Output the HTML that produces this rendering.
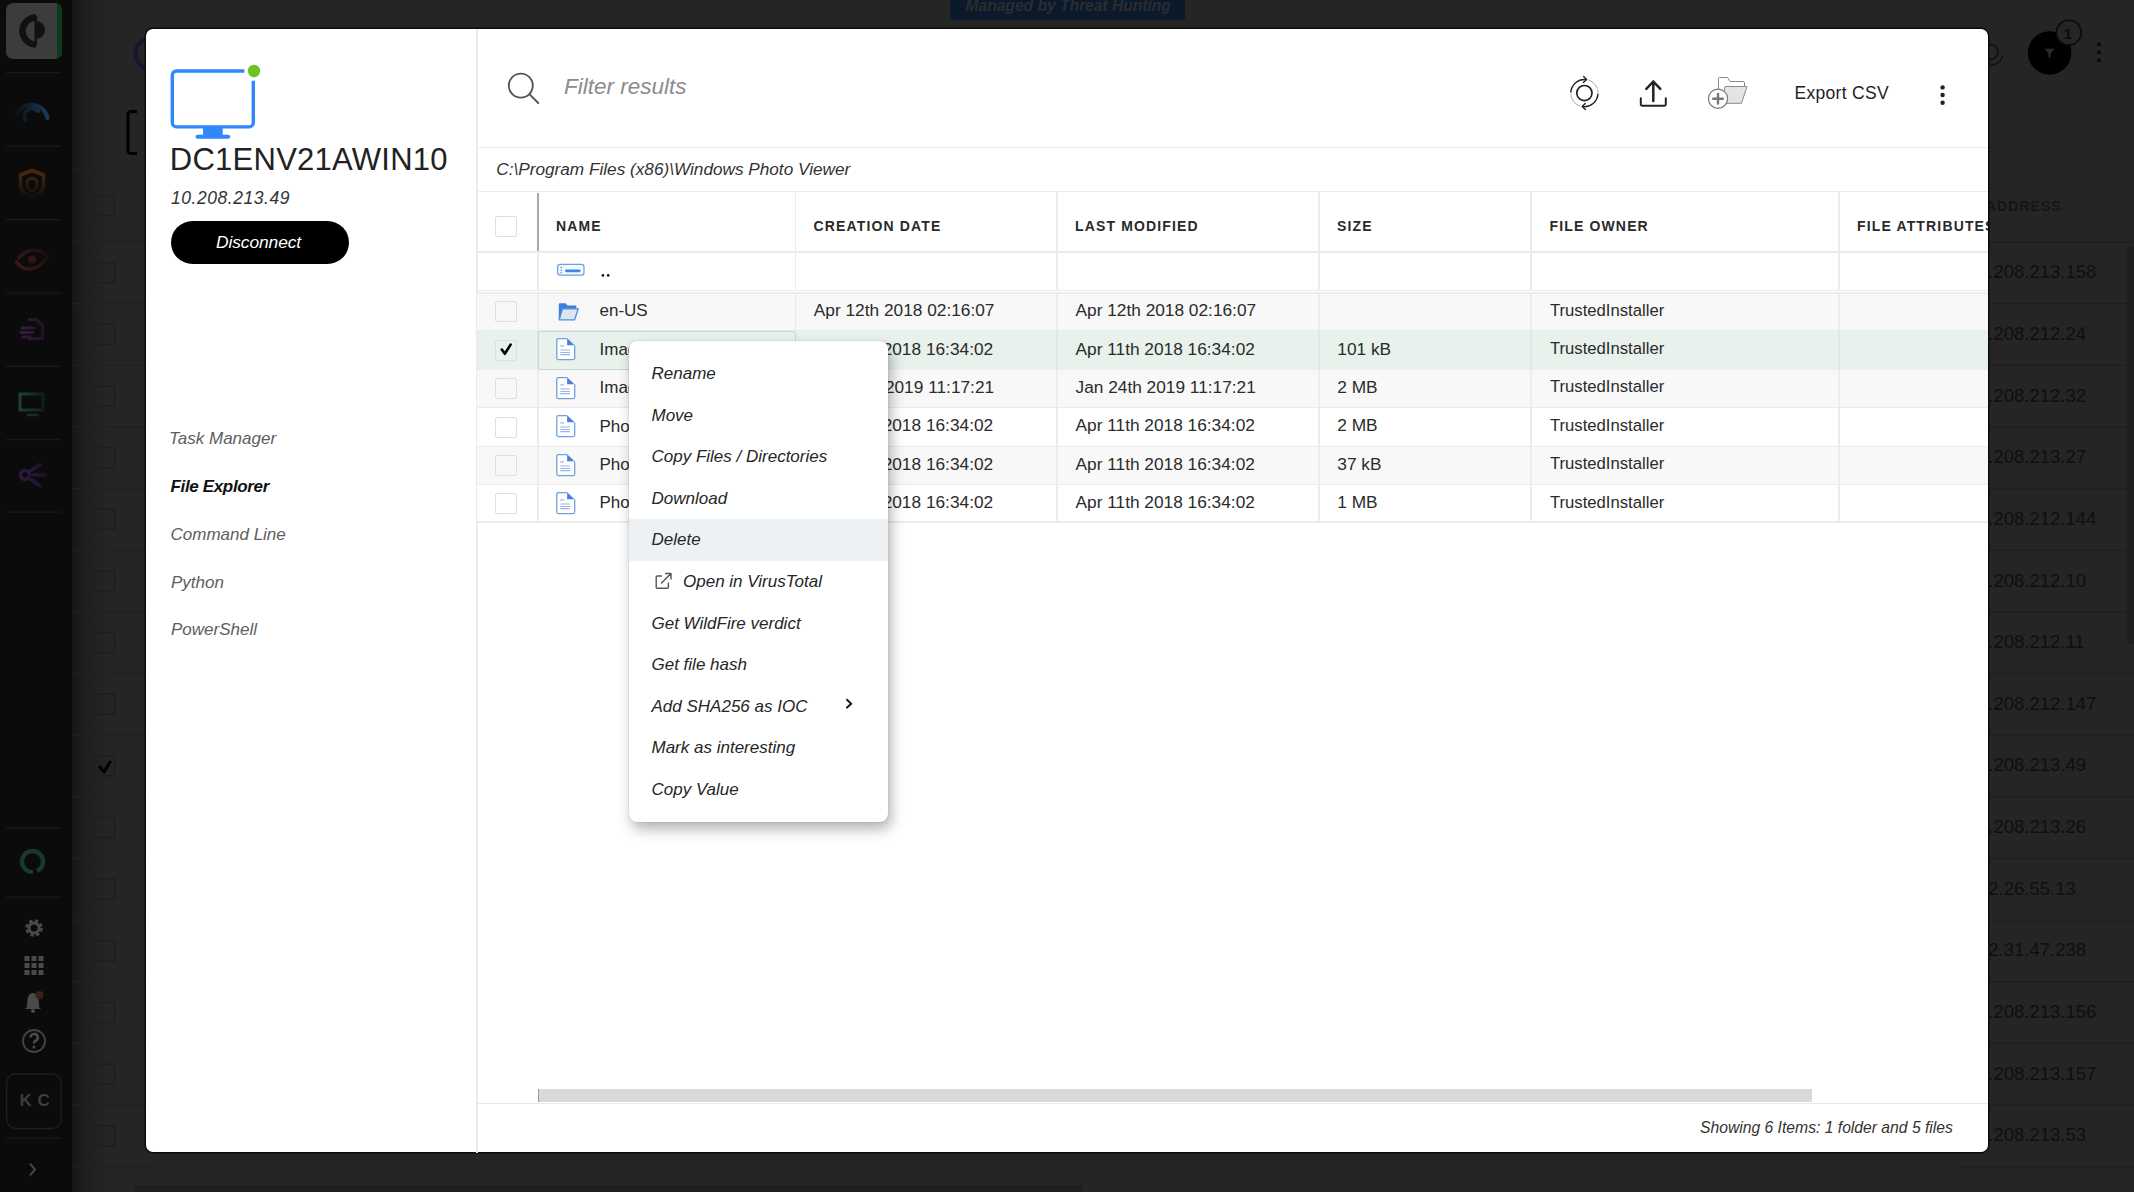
<!DOCTYPE html><html><head><meta charset="utf-8"><style>
*{box-sizing:border-box;margin:0;padding:0}
html,body{width:2134px;height:1192px;overflow:hidden;background:#252525;font-family:"Liberation Sans",sans-serif}
.a{position:absolute}
.t{position:absolute;white-space:nowrap;line-height:1}
.i{font-style:italic}
.hl{position:absolute;height:1.5px;background:#ececec}
.vl{position:absolute;width:1.5px;background:#ececec}
.cb{position:absolute;width:21.5px;height:21px;border:1.5px solid #dfdfdf;border-radius:2px;background:#fff}
.hd{font-weight:bold;letter-spacing:1.15px;color:#2a2a2a}
.rt{color:#2b2b2b}
.mi{font-style:italic;color:#262626}
.nav{font-style:italic;color:#5e5e5e}
</style></head><body>
<div class="a" style="left:0;top:0;width:72px;height:1192px;background:#0b0b0b"></div><div class="a" style="left:72px;top:0;width:38px;height:1192px;background:linear-gradient(90deg,#161616,#1e1e1e 30%,#252525)"></div><div class="a" style="left:6px;top:3px;width:55.5px;height:56px;background:#3c3c3c;border-radius:7px;overflow:hidden"><div class="a" style="right:0;top:0;width:4.5px;height:56px;background:#0d3a1c"></div></div><svg class="a" style="left:0;top:0" width="72" height="1192" viewBox="0 0 72 1192"><path d="M36 17.5 A12 12 0 0 0 36 44.5" fill="none" stroke="#111" stroke-width="6.5"/><path d="M36 21 A9 9 0 0 1 36 39" fill="#111"/><rect x="34.5" y="16" width="2.5" height="30" fill="#111"/><rect x="6" y="72" width="55" height="1.3" fill="#191919"/><rect x="6" y="145.7" width="55" height="1.3" fill="#191919"/><rect x="6" y="219" width="55" height="1.3" fill="#191919"/><rect x="6" y="292.5" width="55" height="1.3" fill="#191919"/><rect x="6" y="365.7" width="55" height="1.3" fill="#191919"/><rect x="6" y="439" width="55" height="1.3" fill="#191919"/><rect x="6" y="511.4" width="55" height="1.3" fill="#191919"/><rect x="6" y="827.5" width="55" height="1.3" fill="#191919"/><rect x="6" y="896.5" width="55" height="1.3" fill="#191919"/><rect x="6" y="1137.5" width="55" height="1.3" fill="#191919"/><defs><linearGradient id="gG" gradientUnits="userSpaceOnUse" x1="14" y1="0" x2="48" y2="0"><stop offset="0" stop-color="#0e0e0e"/><stop offset="1" stop-color="#173a5e"/></linearGradient><linearGradient id="gS" gradientUnits="userSpaceOnUse" x1="0" y1="170" x2="0" y2="198"><stop offset="0" stop-color="#4a2a0c"/><stop offset="1" stop-color="#140c06"/></linearGradient><linearGradient id="gE" gradientUnits="userSpaceOnUse" x1="16" y1="268" x2="48" y2="250"><stop offset="0" stop-color="#3f1818"/><stop offset="1" stop-color="#1a0d0d"/></linearGradient><linearGradient id="gD" gradientUnits="userSpaceOnUse" x1="20" y1="0" x2="44" y2="0"><stop offset="0" stop-color="#3a1c42"/><stop offset="1" stop-color="#1e1222"/></linearGradient><linearGradient id="gM" gradientUnits="userSpaceOnUse" x1="18" y1="0" x2="46" y2="0"><stop offset="0" stop-color="#1c4636"/><stop offset="1" stop-color="#0f1a16"/></linearGradient><linearGradient id="gH" gradientUnits="userSpaceOnUse" x1="18" y1="0" x2="48" y2="0"><stop offset="0" stop-color="#2e1a44"/><stop offset="1" stop-color="#1a1224"/></linearGradient></defs><path d="M16.5 114 A16.5 16.5 0 0 1 47.5 118" fill="none" stroke="url(#gG)" stroke-width="4" stroke-linecap="round"/><path d="M25 120 A8 8 0 0 1 38 111" fill="none" stroke="url(#gG)" stroke-width="4" stroke-linecap="round"/><path d="M32 170.5 L43.5 175 V184 C43.5 191 38 195 32 197 C26 195 20.5 191 20.5 184 V175 Z" fill="none" stroke="url(#gS)" stroke-width="3.5" stroke-linejoin="round"/><path d="M32 178 L37 180.5 V185 C37 188 35 190 32 191.5 C29 190 27 188 27 185 V180.5 Z" fill="none" stroke="url(#gS)" stroke-width="2.6"/><path d="M16.5 262 C24 272 38 272 47 257" fill="none" stroke="url(#gE)" stroke-width="3.5" stroke-linecap="round"/><path d="M19 258 C27 248 40 248 47 256" fill="none" stroke="url(#gE)" stroke-width="3.5" stroke-linecap="round"/><circle cx="32" cy="259.5" r="4" fill="#2e1414"/><path d="M28 319.5 H36.5 L42.5 325.5 V338.5 H28" fill="none" stroke="url(#gD)" stroke-width="3.2" stroke-linejoin="round"/><path d="M22 328 H34 M21 332.5 H33 M23 337 H30" stroke="url(#gD)" stroke-width="3" stroke-linecap="round"/><path d="M20 394 H43 V410 H20 Z" fill="none" stroke="url(#gM)" stroke-width="3"/><path d="M28 415 H38" stroke="url(#gM)" stroke-width="2.5" stroke-linecap="round"/><circle cx="25" cy="475" r="4.5" fill="none" stroke="url(#gH)" stroke-width="3.5"/><path d="M31 470.5 L40 464.5 M33 475 H45 M31 479.5 L40 486" stroke="url(#gH)" stroke-width="3.5" stroke-linecap="round"/><path d="M33 872 A10.5 10.5 0 1 1 37 871" fill="none" stroke="#173a2d" stroke-width="4.5"/><circle cx="34" cy="928" r="6.5" fill="none" stroke="#4a4a4a" stroke-width="4.5" stroke-dasharray="3 2.1"/><circle cx="34" cy="928" r="5" fill="none" stroke="#4a4a4a" stroke-width="3"/><rect x="24.5" y="956" width="5" height="5" fill="#4a4a4a"/><rect x="24.5" y="963" width="5" height="5" fill="#4a4a4a"/><rect x="24.5" y="970" width="5" height="5" fill="#4a4a4a"/><rect x="31.5" y="956" width="5" height="5" fill="#4a4a4a"/><rect x="31.5" y="963" width="5" height="5" fill="#4a4a4a"/><rect x="31.5" y="970" width="5" height="5" fill="#4a4a4a"/><rect x="38.5" y="956" width="5" height="5" fill="#4a4a4a"/><rect x="38.5" y="963" width="5" height="5" fill="#4a4a4a"/><rect x="38.5" y="970" width="5" height="5" fill="#4a4a4a"/><path d="M27 1007 C27 996 29 993 33 993 C37 993 39 996 39 1007 L41 1009 H25 Z" fill="#4a4a4a"/><circle cx="33" cy="1011" r="2" fill="#4a4a4a"/><circle cx="39.5" cy="995" r="4" fill="#3d1c1c"/><circle cx="34" cy="1041" r="11" fill="none" stroke="#444" stroke-width="1.8"/><path d="M30.5 1037.5 A3.6 3.6 0 1 1 35 1041 C34 1041.7 34 1042 34 1043.5" fill="none" stroke="#4a4a4a" stroke-width="2.6"/><circle cx="34" cy="1047" r="1.5" fill="#4a4a4a"/><rect x="6.7" y="1074" width="54.5" height="54.5" rx="9" fill="none" stroke="#1f1f1f" stroke-width="1.3"/><path d="M30 1163.5 L35 1169.5 L30 1175.5" fill="none" stroke="#444" stroke-width="2"/></svg><div class="t " style="left:19.5px;top:1092.1px;font-size:17px;color:#3e3e3e;font-weight:bold;letter-spacing:0.5px">K C</div>
<svg class="a" style="left:72px;top:0" width="80" height="1192" viewBox="72 0 80 1192"><circle cx="151" cy="53.6" r="15.5" fill="none" stroke="#1e1230" stroke-width="4"/><path d="M137 111.5 H131 A3 3 0 0 0 128 114.5 V150.5 A3 3 0 0 0 131 153.5 H137" fill="none" stroke="#000" stroke-width="3"/><rect x="72" y="169" width="80" height="1" fill="#202020"/><rect x="94.5" y="195.5" width="20" height="20" fill="none" stroke="#1e1e1e" stroke-width="1.2"/><rect x="94.5" y="262.7" width="20" height="20" fill="none" stroke="#1d1d1d" stroke-width="1.2"/><rect x="94.5" y="324.3" width="20" height="20" fill="none" stroke="#1d1d1d" stroke-width="1.2"/><rect x="94.5" y="386.0" width="20" height="20" fill="none" stroke="#1d1d1d" stroke-width="1.2"/><rect x="94.5" y="447.6" width="20" height="20" fill="none" stroke="#1d1d1d" stroke-width="1.2"/><rect x="94.5" y="509.3" width="20" height="20" fill="none" stroke="#1d1d1d" stroke-width="1.2"/><rect x="94.5" y="571.0" width="20" height="20" fill="none" stroke="#1d1d1d" stroke-width="1.2"/><rect x="94.5" y="632.6" width="20" height="20" fill="none" stroke="#1d1d1d" stroke-width="1.2"/><rect x="94.5" y="694.2" width="20" height="20" fill="none" stroke="#1d1d1d" stroke-width="1.2"/><rect x="94.5" y="755.9" width="20" height="20" fill="none" stroke="#1d1d1d" stroke-width="1.2"/><rect x="94.5" y="817.5" width="20" height="20" fill="none" stroke="#1d1d1d" stroke-width="1.2"/><rect x="94.5" y="879.2" width="20" height="20" fill="none" stroke="#1d1d1d" stroke-width="1.2"/><rect x="94.5" y="940.8" width="20" height="20" fill="none" stroke="#1d1d1d" stroke-width="1.2"/><rect x="94.5" y="1002.5" width="20" height="20" fill="none" stroke="#1d1d1d" stroke-width="1.2"/><rect x="94.5" y="1064.1" width="20" height="20" fill="none" stroke="#1d1d1d" stroke-width="1.2"/><rect x="94.5" y="1125.8" width="20" height="20" fill="none" stroke="#1d1d1d" stroke-width="1.2"/><rect x="72" y="241.4" width="80" height="1.2" fill="#212121"/><rect x="72" y="303.1" width="80" height="1.2" fill="#212121"/><rect x="72" y="364.7" width="80" height="1.2" fill="#212121"/><rect x="72" y="426.4" width="80" height="1.2" fill="#212121"/><rect x="72" y="488.0" width="80" height="1.2" fill="#212121"/><rect x="72" y="549.6" width="80" height="1.2" fill="#212121"/><rect x="72" y="611.3" width="80" height="1.2" fill="#212121"/><rect x="72" y="673.0" width="80" height="1.2" fill="#212121"/><rect x="72" y="734.6" width="80" height="1.2" fill="#212121"/><rect x="72" y="796.2" width="80" height="1.2" fill="#212121"/><rect x="72" y="857.9" width="80" height="1.2" fill="#212121"/><rect x="72" y="919.5" width="80" height="1.2" fill="#212121"/><rect x="72" y="981.2" width="80" height="1.2" fill="#212121"/><rect x="72" y="1042.8" width="80" height="1.2" fill="#212121"/><rect x="72" y="1104.5" width="80" height="1.2" fill="#212121"/><rect x="72" y="1166.2" width="80" height="1.2" fill="#212121"/><path d="M100 767 L104 772 L110 762" fill="none" stroke="#000" stroke-width="3" stroke-linecap="round" stroke-linejoin="round"/></svg><div class="a" style="left:950px;top:-10px;width:234.5px;height:30px;background:#0b1a2b;border-radius:3px"></div><div class="t i" style="left:965.5px;top:-2.2px;font-size:15.6px;color:#2a2c30;font-weight:bold">Managed by Threat Hunting</div>
<svg class="a" style="left:1960px;top:0" width="174" height="1192" viewBox="1960 0 174 1192"><circle cx="1990.5" cy="52" r="7.5" fill="none" stroke="#0d0d0d" stroke-width="1.3"/><path d="M2003 55 A13.5 13.5 0 0 1 1990 65.5" fill="none" stroke="#0d0d0d" stroke-width="1.3"/><path d="M1997 40 A13.5 13.5 0 0 1 2003.5 49" fill="none" stroke="#111" stroke-width="0.8" stroke-dasharray="1.5 1.5"/><circle cx="2049.6" cy="52.9" r="21.7" fill="#000"/><path d="M2044.5 48.8 H2054.5 L2050.5 53.5 V58.5 L2048.5 57 V53.5 Z" fill="#2a2a2a"/><circle cx="2068.8" cy="32.7" r="12.4" fill="#252525" stroke="#0a0a0a" stroke-width="1.6"/><circle cx="2099" cy="44.3" r="2.1" fill="#0b0b0b"/><circle cx="2099" cy="52.4" r="2.1" fill="#0b0b0b"/><circle cx="2099" cy="60.4" r="2.1" fill="#0b0b0b"/><rect x="1960" y="241.4" width="174" height="1.2" fill="#1f1f1f"/><rect x="1960" y="303.1" width="174" height="1.2" fill="#1f1f1f"/><rect x="1960" y="364.7" width="174" height="1.2" fill="#1f1f1f"/><rect x="1960" y="426.4" width="174" height="1.2" fill="#1f1f1f"/><rect x="1960" y="488.0" width="174" height="1.2" fill="#1f1f1f"/><rect x="1960" y="549.6" width="174" height="1.2" fill="#1f1f1f"/><rect x="1960" y="611.3" width="174" height="1.2" fill="#1f1f1f"/><rect x="1960" y="673.0" width="174" height="1.2" fill="#1f1f1f"/><rect x="1960" y="734.6" width="174" height="1.2" fill="#1f1f1f"/><rect x="1960" y="796.2" width="174" height="1.2" fill="#1f1f1f"/><rect x="1960" y="857.9" width="174" height="1.2" fill="#1f1f1f"/><rect x="1960" y="919.5" width="174" height="1.2" fill="#1f1f1f"/><rect x="1960" y="981.2" width="174" height="1.2" fill="#1f1f1f"/><rect x="1960" y="1042.8" width="174" height="1.2" fill="#1f1f1f"/><rect x="1960" y="1104.5" width="174" height="1.2" fill="#1f1f1f"/><rect x="1960" y="1166.2" width="174" height="1.2" fill="#1f1f1f"/><rect x="2127" y="247" width="7" height="397" fill="#1f1f1f"/></svg><div class="t " style="left:2063.5px;top:26.4px;font-size:15.5px;color:#0b0b0b;font-weight:bold">1</div>
<div class="t " style="left:1985.5px;top:199.4px;font-size:14.5px;color:#151515;font-weight:bold;letter-spacing:0.75px">ADDRESS</div>
<div class="t " style="left:1967.7px;top:263.2px;font-size:18.5px;color:#0f0f0f">10.208.213.158</div>
<div class="t " style="left:1967.7px;top:324.9px;font-size:18.5px;color:#0f0f0f">10.208.212.24</div>
<div class="t " style="left:1967.7px;top:386.5px;font-size:18.5px;color:#0f0f0f">10.208.212.32</div>
<div class="t " style="left:1967.7px;top:448.2px;font-size:18.5px;color:#0f0f0f">10.208.213.27</div>
<div class="t " style="left:1967.7px;top:509.8px;font-size:18.5px;color:#0f0f0f">10.208.212.144</div>
<div class="t " style="left:1967.7px;top:571.5px;font-size:18.5px;color:#0f0f0f">10.208.212.10</div>
<div class="t " style="left:1967.7px;top:633.1px;font-size:18.5px;color:#0f0f0f">10.208.212.11</div>
<div class="t " style="left:1967.7px;top:694.8px;font-size:18.5px;color:#0f0f0f">10.208.212.147</div>
<div class="t " style="left:1967.7px;top:756.4px;font-size:18.5px;color:#0f0f0f">10.208.213.49</div>
<div class="t " style="left:1967.7px;top:818.1px;font-size:18.5px;color:#0f0f0f">10.208.213.26</div>
<div class="t " style="left:1967.7px;top:879.7px;font-size:18.5px;color:#0f0f0f">172.26.55.13</div>
<div class="t " style="left:1967.7px;top:941.4px;font-size:18.5px;color:#0f0f0f">172.31.47.238</div>
<div class="t " style="left:1967.7px;top:1003.0px;font-size:18.5px;color:#0f0f0f">10.208.213.156</div>
<div class="t " style="left:1967.7px;top:1064.7px;font-size:18.5px;color:#0f0f0f">10.208.213.157</div>
<div class="t " style="left:1967.7px;top:1126.3px;font-size:18.5px;color:#0f0f0f">10.208.213.53</div>
<div class="a" style="left:135px;top:1185px;width:948px;height:7px;background:#1f1f1f"></div><div class="a" style="left:145.5px;top:29.3px;width:1842.8px;height:1122.9px;background:#fff;border-radius:7px;box-shadow:0 0 0 1.5px #0c0c0c"></div><div class="vl" style="left:476px;top:29px;height:1124px;background:#ebebeb"></div><svg class="a" style="left:0;top:0" width="480" height="160" viewBox="0 0 480 160"><path d="M244.4 71 H176.5 A4.2 4.2 0 0 0 172.3 75.2 V122.7 A4.2 4.2 0 0 0 176.5 126.9 H249.1 A4.2 4.2 0 0 0 253.3 122.7 V80.7" fill="none" stroke="#2f88fc" stroke-width="3.4"/><rect x="203" y="127" width="19.7" height="9" fill="#2f88fc"/><rect x="195.5" y="134.8" width="34.7" height="4" rx="2" fill="#2f88fc"/><circle cx="254" cy="71" r="6.2" fill="#6cc51f"/></svg><div class="t " style="left:169.8px;top:144.4px;font-size:31px;color:#222;letter-spacing:0.25px">DC1ENV21AWIN10</div>
<div class="t i" style="left:171.0px;top:189.9px;font-size:17.5px;color:#333;letter-spacing:0.55px">10.208.213.49</div>
<div class="a" style="left:170.5px;top:220.7px;width:178.3px;height:43px;border-radius:22px;background:#000"></div><div class="t i" style="left:216.0px;top:233.5px;font-size:17.4px;color:#fff;letter-spacing:-0.1px">Disconnect</div>
<div class="t nav" style="left:169.0px;top:430.2px;font-size:17px;">Task Manager</div>
<div class="t nav" style="left:169.0px;top:478.0px;font-size:17px;font-weight:bold;color:#111;letter-spacing:-0.35px;left:170.5px">File Explorer</div>
<div class="t nav" style="left:169.0px;top:525.8px;font-size:17px;left:170.5px">Command Line</div>
<div class="t nav" style="left:169.0px;top:573.6px;font-size:17px;left:171px">Python</div>
<div class="t nav" style="left:169.0px;top:621.4px;font-size:17px;left:171px">PowerShell</div>
<svg class="a" style="left:0;top:0" width="2000" height="140" viewBox="0 0 2000 140"><circle cx="520.8" cy="85.6" r="12" fill="none" stroke="#555" stroke-width="1.9"/><line x1="529.6" y1="94.4" x2="538.3" y2="103" stroke="#555" stroke-width="1.9" stroke-linecap="round"/><circle cx="1584.4" cy="93.1" r="7.6" fill="none" stroke="#222" stroke-width="1.7"/><path d="M1570.81 92.63 A13.6 13.6 0 0 1 1586.29 79.63" fill="none" stroke="#222" stroke-width="1.4"/><path d="M1583.6 76.6 L1586.6 79.6 L1583.4 82.6" fill="none" stroke="#222" stroke-width="1.4" stroke-linecap="round" stroke-linejoin="round"/><path d="M1597.99 93.57 A13.6 13.6 0 0 1 1582.51 106.57" fill="none" stroke="#222" stroke-width="1.4"/><path d="M1585.2 103.6 L1582.2 106.6 L1585.4 109.6" fill="none" stroke="#222" stroke-width="1.4" stroke-linecap="round" stroke-linejoin="round"/><path d="M1588.60 80.17 A13.6 13.6 0 0 1 1597.97 92.15" fill="none" stroke="#555" stroke-width="0.9" stroke-dasharray="1.2 0.9"/><path d="M1580.20 106.03 A13.6 13.6 0 0 1 1570.83 94.05" fill="none" stroke="#555" stroke-width="0.9" stroke-dasharray="1.2 0.9"/><path d="M1653.3 101 V81.5 M1646.3 88.8 L1653.3 81.5 L1660.3 88.8" fill="none" stroke="#222" stroke-width="2.5" stroke-linecap="round" stroke-linejoin="round"/><path d="M1640.8 98.3 V104.3 A1.5 1.5 0 0 0 1642.3 105.8 H1664.3 A1.5 1.5 0 0 0 1665.8 104.3 V98.3" fill="none" stroke="#222" stroke-width="2" stroke-linecap="round" stroke-linejoin="round"/><path d="M1718.5 99 V78.5 A1 1 0 0 1 1719.5 77.5 H1727.5 L1730 81.5 H1743 A1.5 1.5 0 0 1 1744.5 83 V88" fill="#fff" stroke="#8a8a8a" stroke-width="1"/><path d="M1725 86.5 H1747 L1741.5 103.3 H1722.5 Z" fill="#e4e4e4" stroke="#8a8a8a" stroke-width="1" stroke-linejoin="round"/><circle cx="1718" cy="98.7" r="9.6" fill="#fff" stroke="#7a7a7a" stroke-width="1.2"/><path d="M1718 94 V103.6 M1713.2 98.8 H1722.8" stroke="#777" stroke-width="2.4" stroke-linecap="round"/><circle cx="1942.6" cy="87.4" r="2.2" fill="#222"/><circle cx="1942.6" cy="95" r="2.2" fill="#222"/><circle cx="1942.6" cy="102.7" r="2.2" fill="#222"/></svg><div class="t i" style="left:564.0px;top:75.9px;font-size:22.5px;color:#8c8c8c">Filter results</div>
<div class="t " style="left:1794.5px;top:85.1px;font-size:17.5px;color:#222;letter-spacing:0.3px">Export CSV</div>
<div class="hl" style="left:477px;top:146.5px;width:1511px"></div><div class="t i" style="left:496.3px;top:161.0px;font-size:17.2px;color:#333">C:\Program Files (x86)\Windows Photo Viewer</div>
<div class="hl" style="left:477px;top:190.8px;width:1511px"></div><div class="a" style="left:0;top:0;width:1988px;height:1153px;overflow:hidden"><div class="cb" style="left:495.3px;top:216.3px"></div><div class="a" style="left:537px;top:193px;width:1.6px;height:58px;background:#a8a8a8"></div><div class="vl" style="left:794.5px;top:192px;height:60px"></div><div class="vl" style="left:1056.3px;top:192px;height:60px"></div><div class="vl" style="left:1318.2px;top:192px;height:60px"></div><div class="vl" style="left:1530.3px;top:192px;height:60px"></div><div class="vl" style="left:1838.3px;top:192px;height:60px"></div><div class="t hd" style="left:556.0px;top:219.0px;font-size:14px;">NAME</div>
<div class="t hd" style="left:813.5px;top:219.0px;font-size:14px;">CREATION DATE</div>
<div class="t hd" style="left:1075.0px;top:219.0px;font-size:14px;">LAST MODIFIED</div>
<div class="t hd" style="left:1337.0px;top:219.0px;font-size:14px;">SIZE</div>
<div class="t hd" style="left:1549.5px;top:219.0px;font-size:14px;">FILE OWNER</div>
<div class="t hd" style="left:1857.0px;top:219.0px;font-size:14px;">FILE ATTRIBUTES</div>
<div class="hl" style="left:477px;top:251px;width:1511px"></div><div class="vl" style="left:537.3px;top:252px;height:38px"></div><div class="vl" style="left:794.5px;top:252px;height:38px"></div><div class="vl" style="left:1056.3px;top:252px;height:38px"></div><div class="vl" style="left:1318.2px;top:252px;height:38px"></div><div class="vl" style="left:1530.3px;top:252px;height:38px"></div><div class="vl" style="left:1838.3px;top:252px;height:38px"></div><div class="hl" style="left:477px;top:289.6px;width:1511px"></div><div class="a" style="left:477px;top:293.0px;width:1511px;height:37.9px;background:#f8f8f8"></div><div class="vl" style="left:537.3px;top:293.0px;height:37.9px;background:#ececec"></div><div class="vl" style="left:794.5px;top:293.0px;height:37.9px;background:#ececec"></div><div class="vl" style="left:1056.3px;top:293.0px;height:37.9px;background:#ececec"></div><div class="vl" style="left:1318.2px;top:293.0px;height:37.9px;background:#ececec"></div><div class="vl" style="left:1530.3px;top:293.0px;height:37.9px;background:#ececec"></div><div class="vl" style="left:1838.3px;top:293.0px;height:37.9px;background:#ececec"></div><div class="hl" style="left:477px;top:329.9px;width:1511px;height:2px;background:#ebebeb"></div><div class="hl" style="left:477px;top:292px;width:1511px;height:1.6px;background:#ededed"></div><div class="cb" style="left:495.3px;top:301.4px;background:#f8f8f8"></div><div class="t rt" style="left:599.5px;top:302.3px;font-size:17px;">en-US</div>
<div class="t rt" style="left:813.8px;top:302.1px;font-size:17.3px;">Apr 12th 2018 02:16:07</div>
<div class="t rt" style="left:1075.5px;top:302.1px;font-size:17.3px;">Apr 12th 2018 02:16:07</div>
<div class="t rt" style="left:1337.3px;top:302.1px;font-size:17.3px;"></div>
<div class="t rt" style="left:1549.9px;top:302.6px;font-size:16.7px;">TrustedInstaller</div>
<div class="a" style="left:477px;top:330.9px;width:1511px;height:38.8px;background:#e8f1ec"></div><div class="vl" style="left:537.3px;top:330.9px;height:38.8px;background:#dfe8e3"></div><div class="vl" style="left:794.5px;top:330.9px;height:38.8px;background:#dfe8e3"></div><div class="vl" style="left:1056.3px;top:330.9px;height:38.8px;background:#dfe8e3"></div><div class="vl" style="left:1318.2px;top:330.9px;height:38.8px;background:#dfe8e3"></div><div class="vl" style="left:1530.3px;top:330.9px;height:38.8px;background:#dfe8e3"></div><div class="vl" style="left:1838.3px;top:330.9px;height:38.8px;background:#dfe8e3"></div><div class="hl" style="left:477px;top:368.7px;width:1511px;height:2px;background:#ebebeb"></div><div class="cb" style="left:495.3px;top:339.8px;background:#e8f1ec"></div><svg class="a" style="left:495px;top:339.3px" width="22" height="22" viewBox="0 0 22 22"><path d="M6.8 10.5 L9.8 14.8 L15.6 5.6" fill="none" stroke="#000" stroke-width="2.6" stroke-linecap="round" stroke-linejoin="round"/></svg><div class="t rt" style="left:599.5px;top:340.7px;font-size:17px;">ImageViewer</div>
<div class="t rt" style="left:813.8px;top:340.5px;font-size:17.3px;">Apr 11th 2018 16:34:02</div>
<div class="t rt" style="left:1075.5px;top:340.5px;font-size:17.3px;">Apr 11th 2018 16:34:02</div>
<div class="t rt" style="left:1337.3px;top:340.5px;font-size:17.3px;">101 kB</div>
<div class="t rt" style="left:1549.9px;top:341.0px;font-size:16.7px;">TrustedInstaller</div>
<div class="a" style="left:477px;top:369.7px;width:1511px;height:38.3px;background:#f8f8f8"></div><div class="vl" style="left:537.3px;top:369.7px;height:38.3px;background:#ececec"></div><div class="vl" style="left:794.5px;top:369.7px;height:38.3px;background:#ececec"></div><div class="vl" style="left:1056.3px;top:369.7px;height:38.3px;background:#ececec"></div><div class="vl" style="left:1318.2px;top:369.7px;height:38.3px;background:#ececec"></div><div class="vl" style="left:1530.3px;top:369.7px;height:38.3px;background:#ececec"></div><div class="vl" style="left:1838.3px;top:369.7px;height:38.3px;background:#ececec"></div><div class="hl" style="left:477px;top:407.0px;width:1511px;height:2px;background:#ebebeb"></div><div class="cb" style="left:495.3px;top:378.4px;background:#f8f8f8"></div><div class="t rt" style="left:599.5px;top:379.1px;font-size:17px;">ImagingDevices.exe</div>
<div class="t rt" style="left:813.8px;top:378.9px;font-size:17.3px;">Jan 24th 2019 11:17:21</div>
<div class="t rt" style="left:1075.5px;top:378.9px;font-size:17.3px;">Jan 24th 2019 11:17:21</div>
<div class="t rt" style="left:1337.3px;top:378.9px;font-size:17.3px;">2 MB</div>
<div class="t rt" style="left:1549.9px;top:379.4px;font-size:16.7px;">TrustedInstaller</div>
<div class="a" style="left:477px;top:408.0px;width:1511px;height:38.7px;background:#fff"></div><div class="vl" style="left:537.3px;top:408.0px;height:38.7px;background:#ececec"></div><div class="vl" style="left:794.5px;top:408.0px;height:38.7px;background:#ececec"></div><div class="vl" style="left:1056.3px;top:408.0px;height:38.7px;background:#ececec"></div><div class="vl" style="left:1318.2px;top:408.0px;height:38.7px;background:#ececec"></div><div class="vl" style="left:1530.3px;top:408.0px;height:38.7px;background:#ececec"></div><div class="vl" style="left:1838.3px;top:408.0px;height:38.7px;background:#ececec"></div><div class="hl" style="left:477px;top:445.7px;width:1511px;height:2px;background:#ebebeb"></div><div class="cb" style="left:495.3px;top:416.9px;background:#fff"></div><div class="t rt" style="left:599.5px;top:417.5px;font-size:17px;">PhotoAcq.dll</div>
<div class="t rt" style="left:813.8px;top:417.3px;font-size:17.3px;">Apr 11th 2018 16:34:02</div>
<div class="t rt" style="left:1075.5px;top:417.3px;font-size:17.3px;">Apr 11th 2018 16:34:02</div>
<div class="t rt" style="left:1337.3px;top:417.3px;font-size:17.3px;">2 MB</div>
<div class="t rt" style="left:1549.9px;top:417.8px;font-size:16.7px;">TrustedInstaller</div>
<div class="a" style="left:477px;top:446.7px;width:1511px;height:38.1px;background:#f8f8f8"></div><div class="vl" style="left:537.3px;top:446.7px;height:38.1px;background:#ececec"></div><div class="vl" style="left:794.5px;top:446.7px;height:38.1px;background:#ececec"></div><div class="vl" style="left:1056.3px;top:446.7px;height:38.1px;background:#ececec"></div><div class="vl" style="left:1318.2px;top:446.7px;height:38.1px;background:#ececec"></div><div class="vl" style="left:1530.3px;top:446.7px;height:38.1px;background:#ececec"></div><div class="vl" style="left:1838.3px;top:446.7px;height:38.1px;background:#ececec"></div><div class="hl" style="left:477px;top:483.8px;width:1511px;height:2px;background:#ebebeb"></div><div class="cb" style="left:495.3px;top:455.2px;background:#f8f8f8"></div><div class="t rt" style="left:599.5px;top:455.9px;font-size:17px;">PhotoViewer.dll</div>
<div class="t rt" style="left:813.8px;top:455.7px;font-size:17.3px;">Apr 11th 2018 16:34:02</div>
<div class="t rt" style="left:1075.5px;top:455.7px;font-size:17.3px;">Apr 11th 2018 16:34:02</div>
<div class="t rt" style="left:1337.3px;top:455.7px;font-size:17.3px;">37 kB</div>
<div class="t rt" style="left:1549.9px;top:456.2px;font-size:16.7px;">TrustedInstaller</div>
<div class="a" style="left:477px;top:484.8px;width:1511px;height:37.1px;background:#fff"></div><div class="vl" style="left:537.3px;top:484.8px;height:37.1px;background:#ececec"></div><div class="vl" style="left:794.5px;top:484.8px;height:37.1px;background:#ececec"></div><div class="vl" style="left:1056.3px;top:484.8px;height:37.1px;background:#ececec"></div><div class="vl" style="left:1318.2px;top:484.8px;height:37.1px;background:#ececec"></div><div class="vl" style="left:1530.3px;top:484.8px;height:37.1px;background:#ececec"></div><div class="vl" style="left:1838.3px;top:484.8px;height:37.1px;background:#ececec"></div><div class="hl" style="left:477px;top:520.9px;width:1511px;height:2px;background:#ebebeb"></div><div class="cb" style="left:495.3px;top:492.9px;background:#fff"></div><div class="t rt" style="left:599.5px;top:494.3px;font-size:17px;">PhotoViewer.dll.mui</div>
<div class="t rt" style="left:813.8px;top:494.1px;font-size:17.3px;">Apr 11th 2018 16:34:02</div>
<div class="t rt" style="left:1075.5px;top:494.1px;font-size:17.3px;">Apr 11th 2018 16:34:02</div>
<div class="t rt" style="left:1337.3px;top:494.1px;font-size:17.3px;">1 MB</div>
<div class="t rt" style="left:1549.9px;top:494.6px;font-size:16.7px;">TrustedInstaller</div>
</div><svg class="a" style="left:550px;top:255px" width="70" height="30" viewBox="550 255 70 30"><rect x="557.6" y="264.4" width="26.4" height="10.8" rx="2.6" fill="#f6f9fd" stroke="#6fa0d8" stroke-width="1.2"/><circle cx="561.2" cy="267.4" r="0.75" fill="#3a86e8"/><circle cx="561.2" cy="270.2" r="0.75" fill="#3a86e8"/><circle cx="561.2" cy="272.8" r="0.75" fill="#3a86e8"/><line x1="566.4" y1="270.8" x2="579.2" y2="270.8" stroke="#3a86e8" stroke-width="2.8" stroke-linecap="round"/><circle cx="602.9" cy="275.4" r="1.3" fill="#111"/><circle cx="608.2" cy="275.4" r="1.3" fill="#111"/></svg><svg class="a" style="left:550px;top:295px" width="40" height="30" viewBox="550 295 40 30"><path d="M558.8 320 V304.2 A1 1 0 0 1 559.8 303.2 H565.6 L567.5 305.6 H575.4 A1 1 0 0 1 576.4 306.6 V310" fill="#3d7fdc"/><path d="M562.5 308.8 H578.3 L574.6 319.8 H559.2 Z" fill="#dfe5ef" stroke="#4a8fe8" stroke-width="1.3" stroke-linejoin="round"/></svg><svg class="a" style="left:550px;top:338.3px" width="30" height="30" viewBox="0 0 30 30"><path d="M17.1 0.6 H8.3 A1.5 1.5 0 0 0 6.8 2.1 V20.1 A1.5 1.5 0 0 0 8.3 21.6 H23.2 A1.5 1.5 0 0 0 24.7 20.1 V7.2" fill="#fff" stroke="#6ea2dc" stroke-width="1.3"/><path d="M17.1 0.3 L24.6 7.3 H17.1 Z" fill="#4a7fe0"/><path d="M10.3 7.8 H13.9 M10.3 12 H19.9 M10.3 14.5 H19.9 M10.3 16.7 H19.9" stroke="#94b4ea" stroke-width="1.2"/></svg><svg class="a" style="left:550px;top:376.7px" width="30" height="30" viewBox="0 0 30 30"><path d="M17.1 0.6 H8.3 A1.5 1.5 0 0 0 6.8 2.1 V20.1 A1.5 1.5 0 0 0 8.3 21.6 H23.2 A1.5 1.5 0 0 0 24.7 20.1 V7.2" fill="#fff" stroke="#6ea2dc" stroke-width="1.3"/><path d="M17.1 0.3 L24.6 7.3 H17.1 Z" fill="#4a7fe0"/><path d="M10.3 7.8 H13.9 M10.3 12 H19.9 M10.3 14.5 H19.9 M10.3 16.7 H19.9" stroke="#94b4ea" stroke-width="1.2"/></svg><svg class="a" style="left:550px;top:415.1px" width="30" height="30" viewBox="0 0 30 30"><path d="M17.1 0.6 H8.3 A1.5 1.5 0 0 0 6.8 2.1 V20.1 A1.5 1.5 0 0 0 8.3 21.6 H23.2 A1.5 1.5 0 0 0 24.7 20.1 V7.2" fill="#fff" stroke="#6ea2dc" stroke-width="1.3"/><path d="M17.1 0.3 L24.6 7.3 H17.1 Z" fill="#4a7fe0"/><path d="M10.3 7.8 H13.9 M10.3 12 H19.9 M10.3 14.5 H19.9 M10.3 16.7 H19.9" stroke="#94b4ea" stroke-width="1.2"/></svg><svg class="a" style="left:550px;top:453.5px" width="30" height="30" viewBox="0 0 30 30"><path d="M17.1 0.6 H8.3 A1.5 1.5 0 0 0 6.8 2.1 V20.1 A1.5 1.5 0 0 0 8.3 21.6 H23.2 A1.5 1.5 0 0 0 24.7 20.1 V7.2" fill="#fff" stroke="#6ea2dc" stroke-width="1.3"/><path d="M17.1 0.3 L24.6 7.3 H17.1 Z" fill="#4a7fe0"/><path d="M10.3 7.8 H13.9 M10.3 12 H19.9 M10.3 14.5 H19.9 M10.3 16.7 H19.9" stroke="#94b4ea" stroke-width="1.2"/></svg><svg class="a" style="left:550px;top:491.9px" width="30" height="30" viewBox="0 0 30 30"><path d="M17.1 0.6 H8.3 A1.5 1.5 0 0 0 6.8 2.1 V20.1 A1.5 1.5 0 0 0 8.3 21.6 H23.2 A1.5 1.5 0 0 0 24.7 20.1 V7.2" fill="#fff" stroke="#6ea2dc" stroke-width="1.3"/><path d="M17.1 0.3 L24.6 7.3 H17.1 Z" fill="#4a7fe0"/><path d="M10.3 7.8 H13.9 M10.3 12 H19.9 M10.3 14.5 H19.9 M10.3 16.7 H19.9" stroke="#94b4ea" stroke-width="1.2"/></svg><div class="a" style="left:538px;top:330.6px;width:257.5px;height:39.4px;border:1.3px solid #c5d9ce;border-radius:3px"></div><div class="a" style="left:628.5px;top:341px;width:259.5px;height:481px;background:#fff;border-radius:8px;box-shadow:3px 7px 14px rgba(0,0,0,0.30),0 0 1.5px rgba(0,0,0,0.25)"></div><div class="a" style="left:628.5px;top:519.2px;width:259.5px;height:41.6px;background:#eef1f4"></div><div class="t mi" style="left:651.5px;top:365.0px;font-size:17px;">Rename</div>
<div class="t mi" style="left:651.5px;top:406.6px;font-size:17px;">Move</div>
<div class="t mi" style="left:651.5px;top:448.2px;font-size:17px;">Copy Files / Directories</div>
<div class="t mi" style="left:651.5px;top:489.8px;font-size:17px;">Download</div>
<div class="t mi" style="left:651.5px;top:531.4px;font-size:17px;">Delete</div>
<div class="t mi" style="left:683.0px;top:573.0px;font-size:17px;">Open in VirusTotal</div>
<div class="t mi" style="left:651.5px;top:614.6px;font-size:17px;">Get WildFire verdict</div>
<div class="t mi" style="left:651.5px;top:656.2px;font-size:17px;">Get file hash</div>
<div class="t mi" style="left:651.5px;top:697.8px;font-size:17px;">Add SHA256 as IOC</div>
<div class="t mi" style="left:651.5px;top:739.4px;font-size:17px;">Mark as interesting</div>
<div class="t mi" style="left:651.5px;top:781.0px;font-size:17px;">Copy Value</div>
<svg class="a" style="left:640px;top:560px" width="240" height="160" viewBox="640 560 240 160"><path d="M662 576 H657.2 A1 1 0 0 0 656.2 577 V587.2 A1 1 0 0 0 657.2 588.2 H667.4 A1 1 0 0 0 668.4 587.2 V582.6" fill="none" stroke="#555" stroke-width="1.4"/><path d="M661.5 583 L671 573.5 M665.6 573.5 H671 V579" fill="none" stroke="#555" stroke-width="1.4" stroke-linecap="round" stroke-linejoin="round"/><path d="M847 699.8 L851.2 703.7 L847 707.6" fill="none" stroke="#0f1a2b" stroke-width="2" stroke-linecap="round" stroke-linejoin="round"/></svg><div class="a" style="left:537.5px;top:1089px;width:1274px;height:12.8px;background:#d8dad9;border-left:1.5px solid #9a9a9a"></div><div class="hl" style="left:477px;top:1102.5px;width:1511px;height:1px;background:#e9e9e9"></div><div class="t i" style="left:1700.0px;top:1120.4px;font-size:15.7px;color:#333">Showing 6 Items: 1 folder and 5 files</div>

</body></html>
